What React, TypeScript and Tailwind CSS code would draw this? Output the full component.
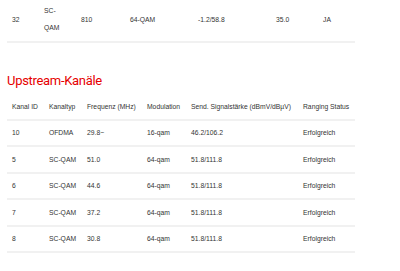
import React from 'react'

type Row = string[]

const downCols = [32, 37, 49, 68, 78, 47, 37]
const upCols = [37, 38, 60, 44, 112, 57]

const upHeader = ['Kanal ID', 'Kanaltyp', 'Frequenz (MHz)', 'Modulation', 'Send. Signalstärke (dBmV/dBµV)', 'Ranging Status']

const upRows: Row[] = [
  ['10', 'OFDMA', '29.8~', '16-qam', '46.2/106.2', 'Erfolgreich'],
  ['5', 'SC-QAM', '51.0', '64-qam', '51.8/111.8', 'Erfolgreich'],
  ['6', 'SC-QAM', '44.6', '64-qam', '51.8/111.8', 'Erfolgreich'],
  ['7', 'SC-QAM', '37.2', '64-qam', '51.8/111.8', 'Erfolgreich'],
  ['8', 'SC-QAM', '30.8', '64-qam', '51.8/111.8', 'Erfolgreich'],
]

function Cols({ widths }: { widths: number[] }) {
  return (
    <colgroup>
      {widths.map((w, i) => (
        <col key={i} style={{ width: w }} />
      ))}
    </colgroup>
  )
}

export default function App() {
  return (
    <div className="w-[400px] h-[271px] overflow-hidden bg-white font-['Liberation_Sans',Arial,sans-serif] text-[6.75px] text-[#333]">
      <div className="pl-[7px] -mt-[3px]">
        <table className="table-fixed border-collapse w-[348px]">
          <Cols widths={downCols} />
          <tbody>
            <tr className="border-b-2 border-[#f1f1f1]">
              <td className="pl-[5px] py-[5px] leading-[17px] align-middle">32</td>
              <td className="pl-[5px] py-[5px] leading-[17px] align-middle">
                SC-
                <br />
                QAM
              </td>
              <td className="pl-[5px] py-[5px] leading-[17px] align-middle">810</td>
              <td className="pl-[5px] py-[5px] leading-[17px] align-middle">64-QAM</td>
              <td className="pl-[5px] py-[5px] leading-[17px] align-middle">-1.2/58.8</td>
              <td className="pl-[5px] py-[5px] leading-[17px] align-middle">35.0</td>
              <td className="pl-[5px] py-[5px] leading-[17px] align-middle">JA</td>
            </tr>
          </tbody>
        </table>

        <h2 className="mt-[29px] mb-[4px] font-['Roboto',sans-serif] text-[13px] tracking-[-0.3px] leading-[18px] text-[#e60000]">
          Upstream-Kanäle
        </h2>

        <table className="table-fixed border-collapse w-[348px]">
          <Cols widths={upCols} />
          <thead>
            <tr className="border-b-2 border-[#f1f1f1]">
              {upHeader.map((h) => (
                <th key={h} className="pl-[5px] py-[4.5px] leading-[15.5px] text-left font-normal whitespace-nowrap">
                  {h}
                </th>
              ))}
            </tr>
          </thead>
          <tbody>
            {upRows.map((r, i) => (
              <tr key={i} className="border-b-2 border-[#f1f1f1]">
                {r.map((c, j) => (
                  <td key={j} className="pl-[5px] py-[4.5px] leading-[15.5px] whitespace-nowrap">
                    {c}
                  </td>
                ))}
              </tr>
            ))}
          </tbody>
        </table>
      </div>
    </div>
  )
}
